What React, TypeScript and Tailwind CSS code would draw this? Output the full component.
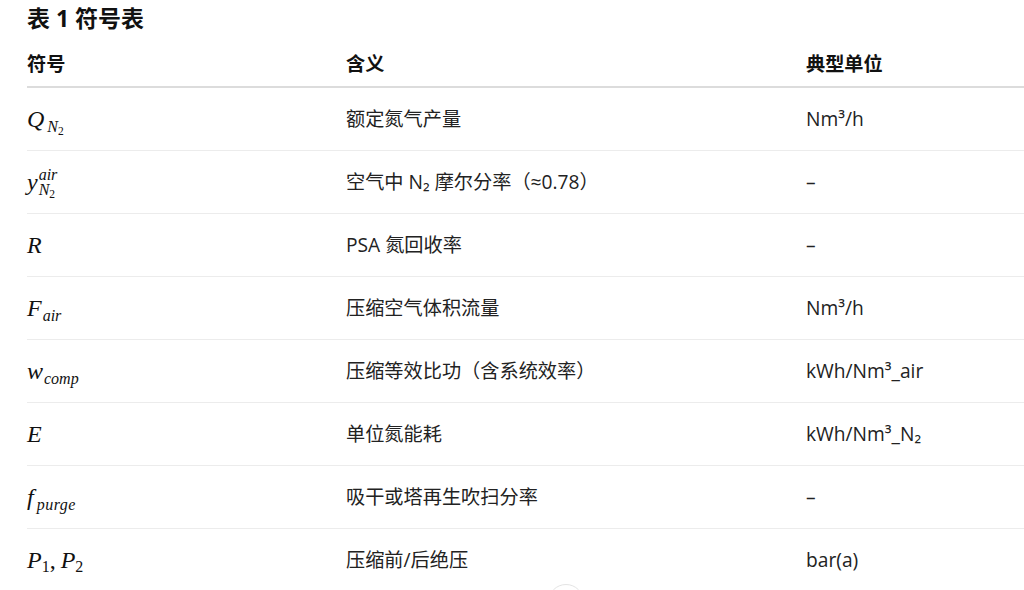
import React from "react";

const mathFont = "font-['Liberation_Serif','DejaVu_Serif',serif]";

const N2 = (
  <span className="inline-flex items-baseline">
    <span className="italic">N</span>
    <span className="not-italic text-[11.5px] translate-y-[3px]">2</span>
  </span>
);

const base = `inline-flex items-baseline ${mathFont} text-[24px] leading-none text-[#111]`;

const rows: { sym: React.ReactNode; mean: string; unit: React.ReactNode }[] = [
  {
    sym: (
      <span className={base}>
        <span className="italic">Q</span>
        <span className="text-[16px] translate-y-[5px] ml-[3px]">{N2}</span>
      </span>
    ),
    mean: "额定氮气产量",
    unit: <>Nm<span className="font-['Noto_Sans',sans-serif]">³</span>/h</>,
  },
  {
    sym: (
      <span className={`inline-flex items-center ${mathFont} text-[24px] leading-none text-[#111]`}>
        <span className="italic">y</span>
        <span className="inline-flex flex-col text-[16px] leading-[15px] ml-[1px] translate-y-[1px]">
          <span className="italic">air</span>
          <span>{N2}</span>
        </span>
      </span>
    ),
    mean: "空气中 N₂ 摩尔分率（≈0.78）",
    unit: "–",
  },
  {
    sym: (
      <span className={base}>
        <span className="italic">R</span>
      </span>
    ),
    mean: "PSA 氮回收率",
    unit: "–",
  },
  {
    sym: (
      <span className={base}>
        <span className="italic">F</span>
        <span className="italic text-[16px] translate-y-[5px] ml-[1px]">air</span>
      </span>
    ),
    mean: "压缩空气体积流量",
    unit: <>Nm<span className="font-['Noto_Sans',sans-serif]">³</span>/h</>,
  },
  {
    sym: (
      <span className={base}>
        <span className="italic">w</span>
        <span className="italic text-[16px] translate-y-[5px] ml-[1px]">comp</span>
      </span>
    ),
    mean: "压缩等效比功（含系统效率）",
    unit: <>kWh/Nm<span className="font-['Noto_Sans',sans-serif]">³</span>_air</>,
  },
  {
    sym: (
      <span className={base}>
        <span className="italic">E</span>
      </span>
    ),
    mean: "单位氮能耗",
    unit: <>kWh/Nm<span className="font-['Noto_Sans',sans-serif]">³</span>_N₂</>,
  },
  {
    sym: (
      <span className={base}>
        <span className="italic">f</span>
        <span className="italic text-[16px] translate-y-[5px] ml-[3px] tracking-[0.5px]">purge</span>
      </span>
    ),
    mean: "吸干或塔再生吹扫分率",
    unit: "–",
  },
  {
    sym: (
      <span className={base}>
        <span className="italic">P</span>
        <span className="text-[16px] translate-y-[4px]">1</span>
        <span className="mr-[5px]">,</span>
        <span className="italic">P</span>
        <span className="text-[16px] translate-y-[4px]">2</span>
      </span>
    ),
    mean: "压缩前/后绝压",
    unit: "bar(a)",
  },
];

export default function App() {
  return (
    <div className="relative w-[1024px] h-[590px] overflow-hidden bg-white font-['Open_Sans','Noto_Sans_CJK_SC',sans-serif] text-[#222]">
      <div className="pl-[27px] pt-[2px]">
        <div className="text-[23px] font-bold leading-[33px] text-[#111]">表 1 符号表</div>
        <div className="w-[1100px] mt-[8px]">
          <div className="flex items-center h-[45px] border-b-2 border-[#dcdcdc] text-[19.2px] font-bold text-[#111]">
            <div className="w-[319px]">符号</div>
            <div className="w-[460px]">含义</div>
            <div className="flex-1">典型单位</div>
          </div>
          {rows.map((r, i) => (
            <div key={i} className="flex items-center h-[63px] border-b border-[#ececec] text-[19.2px]">
              <div className="w-[319px] flex items-center">{r.sym}</div>
              <div className="w-[460px]">{r.mean}</div>
              <div className="flex-1">{r.unit}</div>
            </div>
          ))}
        </div>
      </div>
      <div className="absolute left-[548px] top-[584px] w-[36px] h-[36px] rounded-full border border-[#e4e4e4] bg-white" />
    </div>
  );
}
